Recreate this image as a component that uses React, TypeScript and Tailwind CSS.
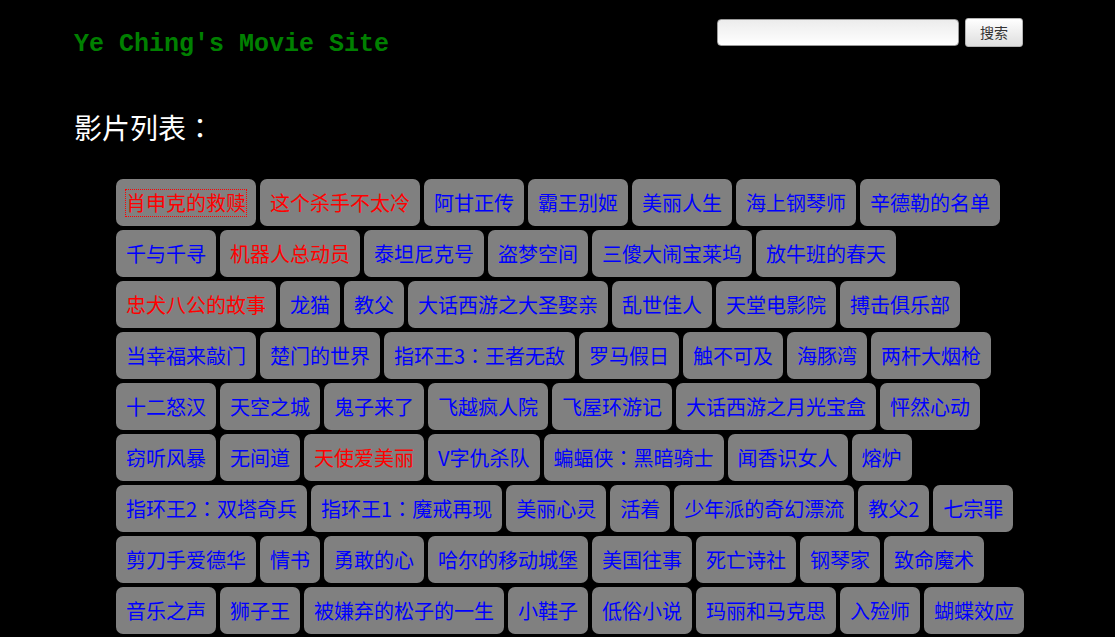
import React from "react";

const movies: { name: string; hot?: boolean }[] = [
  { name: "肖申克的救赎", hot: true },
  { name: "这个杀手不太冷", hot: true },
  { name: "阿甘正传" },
  { name: "霸王别姬" },
  { name: "美丽人生" },
  { name: "海上钢琴师" },
  { name: "辛德勒的名单" },
  { name: "千与千寻" },
  { name: "机器人总动员", hot: true },
  { name: "泰坦尼克号" },
  { name: "盗梦空间" },
  { name: "三傻大闹宝莱坞" },
  { name: "放牛班的春天" },
  { name: "忠犬八公的故事", hot: true },
  { name: "龙猫" },
  { name: "教父" },
  { name: "大话西游之大圣娶亲" },
  { name: "乱世佳人" },
  { name: "天堂电影院" },
  { name: "搏击俱乐部" },
  { name: "当幸福来敲门" },
  { name: "楚门的世界" },
  { name: "指环王3：王者无敌" },
  { name: "罗马假日" },
  { name: "触不可及" },
  { name: "海豚湾" },
  { name: "两杆大烟枪" },
  { name: "十二怒汉" },
  { name: "天空之城" },
  { name: "鬼子来了" },
  { name: "飞越疯人院" },
  { name: "飞屋环游记" },
  { name: "大话西游之月光宝盒" },
  { name: "怦然心动" },
  { name: "窃听风暴" },
  { name: "无间道" },
  { name: "天使爱美丽", hot: true },
  { name: "V字仇杀队" },
  { name: "蝙蝠侠：黑暗骑士" },
  { name: "闻香识女人" },
  { name: "熔炉" },
  { name: "指环王2：双塔奇兵" },
  { name: "指环王1：魔戒再现" },
  { name: "美丽心灵" },
  { name: "活着" },
  { name: "少年派的奇幻漂流" },
  { name: "教父2" },
  { name: "七宗罪" },
  { name: "剪刀手爱德华" },
  { name: "情书" },
  { name: "勇敢的心" },
  { name: "哈尔的移动城堡" },
  { name: "美国往事" },
  { name: "死亡诗社" },
  { name: "钢琴家" },
  { name: "致命魔术" },
  { name: "音乐之声" },
  { name: "狮子王" },
  { name: "被嫌弃的松子的一生" },
  { name: "小鞋子" },
  { name: "低俗小说" },
  { name: "玛丽和马克思" },
  { name: "入殓师" },
  { name: "蝴蝶效应" },
];

const cjk = "font-['Noto_Sans_CJK_SC',sans-serif]";

// the full-width colon sits centred in the reference, as in the TC face
function Title({ text }: { text: string }) {
  const parts = text.split("：");
  return (
    <>
      {parts.map((p, i) => (
        <React.Fragment key={i}>
          {p}
          {i < parts.length - 1 && (
            <span className="font-['Noto_Sans_CJK_TC',sans-serif]">：</span>
          )}
        </React.Fragment>
      ))}
    </>
  );
}

function MovieButton({ name, hot, focused }: { name: string; hot?: boolean; focused?: boolean }) {
  return (
    <div className="h-[47px] rounded-[7px] bg-[#808080] px-[10px] flex items-center">
      <span
        className={`text-[20px] leading-[26px] ${hot ? "text-[#ff0000]" : "text-[#0000ff]"} ${
          focused ? "outline outline-1 outline-dotted outline-[#ff0000]" : ""
        }`}
      >
        <Title text={name} />
      </span>
    </div>
  );
}

export default function App() {
  return (
    <div className={`min-h-[637px] bg-black ${cjk}`}>
      <div className="flex items-start justify-between pl-[74px] pr-[92px]">
        <h1 className="mt-[30px] font-['Liberation_Mono',monospace] text-[25px] leading-[30px] font-bold text-[#008000]">
          Ye Ching's Movie Site
        </h1>
        <form className="mt-[18px] flex items-center gap-[6px]" onSubmit={(e) => e.preventDefault()}>
          <input
            type="text"
            className="h-[27px] w-[242px] rounded-[4px] border border-[#9a9a9a] bg-gradient-to-b from-[#ececec] to-white px-2 text-[13px] outline-none"
          />
          <button
            type="submit"
            className="h-[29px] w-[58px] rounded-[3px] border border-[#b4b4b4] bg-gradient-to-b from-white to-[#dedede] text-[14px] text-[#333]"
          >
            搜索
          </button>
        </form>
      </div>

      <h2 className="mt-[47px] pl-[74px] text-[28px] leading-[40px] text-white">
        <Title text="影片列表：" />
      </h2>

      <div className="mt-[32px] ml-[116px] mr-[74px] flex flex-wrap gap-[4px] pb-4">
        {movies.map((m, i) => (
          <MovieButton key={m.name} name={m.name} hot={m.hot} focused={i === 0} />
        ))}
      </div>
    </div>
  );
}
